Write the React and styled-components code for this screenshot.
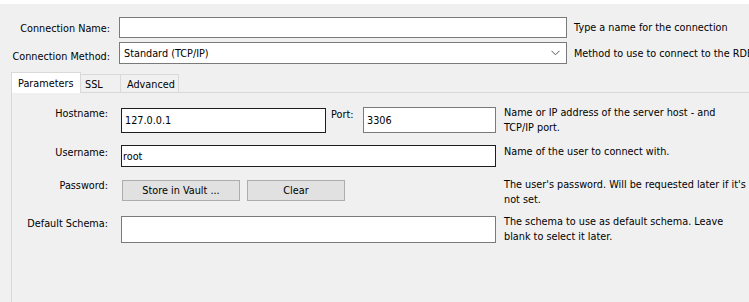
import React from "react";
import styled, { createGlobalStyle } from "styled-components";

const GlobalStyle = createGlobalStyle`
  html, body { margin: 0; padding: 0; background: #f0f0f0; overflow: hidden; }
  body { font-family: "DejaVu Sans", "Liberation Sans", sans-serif; font-size: 9.7px; color: #000; }
  * { box-sizing: border-box; }
`;

const Window = styled.div`
  width: 749px;
  height: 302px;
  overflow: hidden;
  background: #f0f0f0;
  border-top: 4px solid #ffffff;
`;

const Header = styled.div`
  display: grid;
  grid-template-columns: 119px 448px 1fr;
  row-gap: 4px;
  padding-top: 13px;
`;

const HeaderLabel = styled.div`
  padding-right: 9px;
  text-align: right;
  white-space: nowrap;
  align-self: ${(p) => (p.$bottom ? "end" : "center")};
  line-height: 15px;
  margin-top: ${(p) => (p.$bottom ? "0" : "2px")};
`;

const HeaderHint = styled.div`
  padding-left: 7px;
  white-space: nowrap;
  overflow: hidden;
  align-self: center;
  line-height: 15px;
`;

const TextBox = styled.div`
  height: ${(p) => p.$h || 21}px;
  width: ${(p) => (p.$w ? `${p.$w}px` : "auto")};
  flex: ${(p) => (p.$grow ? 1 : "none")};
  background: #fff;
  border: 1px solid ${(p) => (p.$dark ? "#1e1e1e" : "#7a7a7a")};
  display: flex;
  align-items: center;
  padding-left: ${(p) => (p.$pad ?? 3)}px;
  white-space: nowrap;
  margin-top: ${(p) => p.$mt || 0}px;
`;

const Select = styled.div`
  height: 22px;
  background: #fff;
  border: 1px solid #7a7a7a;
  display: flex;
  align-items: center;
  justify-content: space-between;
  padding: 0 6px 0 4px;
`;

const TabBar = styled.div`
  display: flex;
  align-items: flex-end;
  margin-top: 8px;
  padding-left: 11px;
  height: 20px;
  position: relative;
  z-index: 1;
`;

const Tab = styled.div`
  height: ${(p) => (p.$active ? 21 : 18)}px;
  width: ${(p) => p.$w}px;
  background: ${(p) => (p.$active ? "#ffffff" : "#f0f0f0")};
  border: 1px solid #d9d9d9;
  border-bottom: none;
  border-left: ${(p) => (p.$first ? "1px solid #d9d9d9" : "none")};
  margin-bottom: ${(p) => (p.$active ? -1 : 0)}px;
  padding-left: ${(p) => p.$pl}px;
  display: flex;
  align-items: center;
  padding-top: ${(p) => (p.$active ? 0 : 2)}px;
  white-space: nowrap;
`;

const Panel = styled.div`
  margin-left: 11px;
  border-top: 1px solid #d9d9d9;
  border-left: 1px solid #d9d9d9;
  height: 220px;
  background: #f0f0f0;
  padding-top: 14px;
  display: grid;
  grid-template-columns: 109px 375px 1fr;
  grid-template-rows: 25px 22px 21px 27px;
  row-gap: 13px;
  align-items: start;
`;

const FieldLabel = styled.div`
  padding-right: 13px;
  text-align: right;
  white-space: nowrap;
  line-height: 15px;
  margin-top: ${(p) => p.$mt || 0}px;
`;

const FieldCell = styled.div`
  display: flex;
  align-items: flex-start;
  margin-top: ${(p) => p.$mt || 0}px;
`;

const PortLabel = styled.div`
  flex: 1;
  padding-left: 5px;
  line-height: 15px;
  margin-top: -1px;
`;

const Hint = styled.div`
  padding-left: 8px;
  line-height: 14.5px;
  white-space: nowrap;
  margin-top: ${(p) => p.$mt || 0}px;
`;

const Button = styled.div`
  width: ${(p) => p.$w}px;
  height: 21px;
  background: #e1e1e1;
  border: 1px solid #adadad;
  display: flex;
  align-items: center;
  justify-content: center;
  margin-left: ${(p) => p.$ml || 0}px;
  white-space: nowrap;
`;

const Chevron = () => (
  <svg width="9" height="6" viewBox="0 0 9 6">
    <path d="M0.5 0.8 L4.5 4.8 L8.5 0.8" fill="none" stroke="#5a5a5a" strokeWidth="1" />
  </svg>
);

export default function App() {
  return (
    <Window>
      <GlobalStyle />
      <Header>
        <HeaderLabel>Connection Name:</HeaderLabel>
        <TextBox $h={21} />
        <HeaderHint>Type a name for the connection</HeaderHint>
        <HeaderLabel $bottom>Connection Method:</HeaderLabel>
        <Select>
          <span>Standard (TCP/IP)</span>
          <Chevron />
        </Select>
        <HeaderHint>Method to use to connect to the RDBMS</HeaderHint>
      </Header>
      <TabBar>
        <Tab $active $first $w={70} $pl={6}>Parameters</Tab>
        <Tab $w={40} $pl={4}>SSL</Tab>
        <Tab $w={58} $pl={6}>Advanced</Tab>
      </TabBar>
      <Panel>
        <FieldLabel $mt={-1}>Hostname:</FieldLabel>
        <FieldCell $mt={1}>
          <TextBox $w={205} $h={25} $dark $pad={3}>127.0.0.1</TextBox>
          <PortLabel>Port:</PortLabel>
          <TextBox $w={133} $h={26} $pad={3} $mt={-1}>3306</TextBox>
        </FieldCell>
        <Hint $mt={-1}>
          Name or IP address of the server host - and
          <br />
          TCP/IP port.
        </Hint>

        <FieldLabel $mt={0}>Username:</FieldLabel>
        <TextBox $h={22} $dark $pad={1}>root</TextBox>
        <Hint>Name of the user to connect with.</Hint>

        <FieldLabel $mt={-2}>Password:</FieldLabel>
        <FieldCell>
          <Button $w={118} $ml={1}>Store in Vault ...</Button>
          <Button $w={98} $ml={7}>Clear</Button>
        </FieldCell>
        <Hint $mt={-2}>
          The user's password. Will be requested later if it's
          <br />
          not set.
        </Hint>

        <FieldLabel $mt={2}>Default Schema:</FieldLabel>
        <FieldCell $mt={2}>
          <TextBox $h={27} $grow />
        </FieldCell>
        <Hint $mt={1}>
          The schema to use as default schema. Leave
          <br />
          blank to select it later.
        </Hint>
      </Panel>
    </Window>
  );
}
